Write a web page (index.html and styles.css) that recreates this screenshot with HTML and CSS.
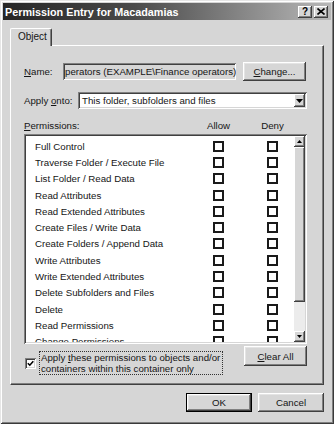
FILE: index.html
```html
<!DOCTYPE html>
<html>
<head>
<meta charset="utf-8">
<link rel="stylesheet" href="styles.css">
</head>
<body>
<div class="window">
  <div class="titlebar">
    <span class="title">Permission Entry for Macadamias</span>
    <div class="caption-btns">
      <span class="cbtn qbtn">?</span>
      <span class="cbtn"><svg width="8" height="7" viewBox="0 0 8 7"><path d="M0.5 0.5 L7.5 6.5 M7.5 0.5 L0.5 6.5" stroke="#000" stroke-width="1.6" fill="none"/></svg></span>
    </div>
  </div>
  <div class="tabs"><div class="tab">Object</div></div>
  <div class="panel">
    <div class="name-row">
      <span class="label name-label"><u>N</u>ame:</span>
      <div class="field">perators (EXAMPLE\Finance operators)</div>
      <div class="btn change-btn"><u>C</u>hange...</div>
    </div>
    <div class="apply-row">
      <span class="label apply-label">Apply <u>o</u>nto:</span>
      <div class="combo">
        <span class="combo-text">This folder, subfolders and files</span>
        <span class="combo-btn"><svg width="7" height="4" viewBox="0 0 7 4"><polygon points="0,0 7,0 3.5,4" fill="#000"/></svg></span>
      </div>
    </div>
    <div class="perm-head">
      <span class="ph-label"><u>P</u>ermissions:</span>
      <span class="ph-col"><span>Allow</span></span>
      <span></span>
      <span class="ph-col"><span>Deny</span></span>
    </div>
    <div class="listbox">
      <div class="items">
        <div class="item"><span>Full Control</span><span class="cb"></span><span></span><span class="cb"></span></div>
        <div class="item"><span>Traverse Folder / Execute File</span><span class="cb"></span><span></span><span class="cb"></span></div>
        <div class="item"><span>List Folder / Read Data</span><span class="cb"></span><span></span><span class="cb"></span></div>
        <div class="item"><span>Read Attributes</span><span class="cb"></span><span></span><span class="cb"></span></div>
        <div class="item"><span>Read Extended Attributes</span><span class="cb"></span><span></span><span class="cb"></span></div>
        <div class="item"><span>Create Files / Write Data</span><span class="cb"></span><span></span><span class="cb"></span></div>
        <div class="item"><span>Create Folders / Append Data</span><span class="cb"></span><span></span><span class="cb"></span></div>
        <div class="item"><span>Write Attributes</span><span class="cb"></span><span></span><span class="cb"></span></div>
        <div class="item"><span>Write Extended Attributes</span><span class="cb"></span><span></span><span class="cb"></span></div>
        <div class="item"><span>Delete Subfolders and Files</span><span class="cb"></span><span></span><span class="cb"></span></div>
        <div class="item"><span>Delete</span><span class="cb"></span><span></span><span class="cb"></span></div>
        <div class="item"><span>Read Permissions</span><span class="cb"></span><span></span><span class="cb"></span></div>
        <div class="item"><span>Change Permissions</span><span class="cb"></span><span></span><span class="cb"></span></div>
      </div>
      <div class="scrollbar">
        <div class="sb-btn"><svg width="5" height="3" viewBox="0 0 5 3"><polygon points="0,3 2.5,0 5,3" fill="#000"/></svg></div>
        <div class="sb-thumb"></div>
        <div class="sb-track"></div>
        <div class="sb-btn"><svg width="5" height="3" viewBox="0 0 5 3"><polygon points="0,0 5,0 2.5,3" fill="#000"/></svg></div>
      </div>
    </div>
    <div class="bottom-row">
      <div class="apply-check">
        <span class="chk"><svg width="7" height="7" viewBox="0 0 7 7"><path d="M0.8 3.2 L2.8 5.2 L6.3 1.2" stroke="#000" stroke-width="1.6" fill="none"/></svg></span>
        <span class="chk-label">Apply <u>t</u>hese permissions to objects and/or<br>containers within this container only</span>
      </div>
      <div class="btn clear-btn"><u>C</u>lear All</div>
    </div>
  </div>
  <div class="footer">
    <div class="btn ok-btn">OK</div>
    <div class="btn cancel-btn">Cancel</div>
  </div>
</div>
</body>
</html>
```

FILE: styles.css
```css
body {
  margin: 0;
  background: #d6d6d6;
  font-family: "Liberation Sans", Arial, sans-serif;
  font-size: 9.7px;
  color: #151515;
}

.window {
  width: 334px;
  height: 424px;
  box-sizing: border-box;
  padding: 3px;
  background: #d6d6d6;
  box-shadow: inset 1px 1px #e6e6e6, inset -1px -1px #3a3a3a, inset 2px 2px #fff, inset -2px -2px #808080;
  display: flex;
  flex-direction: column;
}

.titlebar {
  height: 17px;
  display: flex;
  align-items: center;
  justify-content: space-between;
  background: linear-gradient(to right, #262626 0%, #4a4a4a 40%, #b8b8b8 100%);
  padding: 0 3px 0 2px;
}

.title {
  color: #fff;
  font-weight: bold;
  font-size: 10.8px;
}

.caption-btns {
  display: flex;
  gap: 2px;
}

.cbtn {
  width: 14px;
  height: 12px;
  box-sizing: border-box;
  background: #d6d6d6;
  box-shadow: inset -1px -1px #404040, inset 1px 1px #fff, inset -2px -2px #808080;
  display: flex;
  align-items: center;
  justify-content: center;
}

.qbtn {
  font-weight: bold;
  font-size: 10px;
  color: #000;
  line-height: 1;
}

.tabs {
  margin-top: 8px;
  padding-left: 7px;
  display: flex;
}

.tab {
  width: 42px;
  height: 18px;
  box-sizing: border-box;
  margin-bottom: -1px;
  background: #d6d6d6;
  border-top: 1px solid #fff;
  border-left: 1px solid #fff;
  border-right: 1px solid #404040;
  box-shadow: inset -1px 0 #808080;
  border-radius: 2px 2px 0 0;
  padding-left: 7px;
  padding-top: 2px;
  line-height: 12px;
  font-size: 10px;
  position: relative;
  z-index: 1;
}

.panel {
  margin: 0 7px;
  height: 340px;
  box-sizing: border-box;
  border-top: 1px solid #fff;
  border-left: 1px solid #fff;
  border-right: 1px solid #404040;
  border-bottom: 1px solid #404040;
  box-shadow: inset -1px -1px #808080;
  padding: 16px 16px 0 13px;
  display: flex;
  flex-direction: column;
}

.name-row, .apply-row {
  display: flex;
  align-items: center;
}

.name-row { height: 19px; }

.apply-row {
  height: 17px;
  margin-top: 11px;
}

.name-label { width: 39px; flex: none; }
.apply-label { width: 54px; flex: none; }

.field {
  width: 173px;
  height: 17px;
  box-sizing: border-box;
  padding: 0 2px;
  line-height: 17px;
  white-space: nowrap;
  overflow: hidden;
  background: #d6d6d6;
  box-shadow: inset 1px 1px #808080, inset -1px -1px #fff, inset 2px 2px #404040, inset -2px -2px #d6d6d6;
}

.btn {
  box-sizing: border-box;
  background: #d6d6d6;
  box-shadow: inset -1px -1px #404040, inset 1px 1px #fff, inset -2px -2px #808080, inset 2px 2px #e4e4e4;
  display: flex;
  align-items: center;
  justify-content: center;
}

.change-btn {
  width: 63px;
  height: 19px;
  margin-left: 7px;
}

.combo {
  width: 229px;
  height: 17px;
  box-sizing: border-box;
  background: #fff;
  box-shadow: inset 1px 1px #808080, inset -1px -1px #fff, inset 2px 2px #404040, inset -2px -2px #d6d6d6;
  display: flex;
  align-items: center;
  padding: 2px 2px 2px 4px;
}

.combo-text { flex: 1; }

.combo-btn {
  width: 11px;
  height: 13px;
  box-sizing: border-box;
  background: #d6d6d6;
  box-shadow: inset -1px -1px #404040, inset 1px 1px #fff, inset -2px -2px #808080;
  display: flex;
  align-items: center;
  justify-content: center;
}

.perm-head {
  margin-top: 10px;
  height: 13px;
  display: grid;
  grid-template-columns: 189px 11px 43px 11px;
  align-items: center;
}

.ph-col {
  display: flex;
  justify-content: center;
  white-space: nowrap;
}

.listbox {
  margin-top: 2px;
  width: 283px;
  height: 210px;
  box-sizing: border-box;
  padding: 2px;
  background: #fff;
  box-shadow: inset 1px 1px #808080, inset -1px -1px #fff, inset 2px 2px #404040, inset -2px -2px #d6d6d6;
  display: flex;
}

.items {
  flex: 1;
  overflow: hidden;
  padding-top: 2px;
}

.item {
  height: 16.3px;
  padding-left: 9px;
  display: grid;
  grid-template-columns: 178px 11px 43px 11px;
  align-items: center;
  white-space: nowrap;
}

.cb {
  width: 11px;
  height: 11px;
  box-sizing: border-box;
  border: 2px solid #1a1a1a;
  background: #fff;
}

.scrollbar {
  width: 11px;
  display: flex;
  flex-direction: column;
}

.sb-btn {
  height: 11px;
  box-sizing: border-box;
  background: #d6d6d6;
  box-shadow: inset -1px -1px #404040, inset 1px 1px #fff, inset -2px -2px #808080;
  display: flex;
  align-items: center;
  justify-content: center;
}

.sb-thumb {
  height: 155px;
  background: #d6d6d6;
  box-shadow: inset -1px -1px #404040, inset 1px 1px #fff, inset -2px -2px #808080;
}

.sb-track {
  flex: 1;
  background: #ececec;
}

.bottom-row {
  margin-top: 2px;
  display: flex;
  justify-content: space-between;
  align-items: flex-start;
}

.apply-check {
  display: flex;
  align-items: center;
  margin-top: 5px;
  padding-left: 1px;
}

.chk {
  width: 11px;
  height: 11px;
  box-sizing: border-box;
  background: #fff;
  box-shadow: inset 1px 1px #808080, inset -1px -1px #fff, inset 2px 2px #404040, inset -2px -2px #d6d6d6;
  display: flex;
  align-items: center;
  justify-content: center;
  margin-right: 3px;
}

.chk-label {
  border: 1px dotted #333;
  padding: 0 2px 0 1px;
  line-height: 11px;
}

.clear-btn {
  width: 63px;
  height: 20px;
}

.footer {
  margin-top: 8px;
  padding-right: 7px;
  display: flex;
  justify-content: flex-end;
  gap: 6px;
}

.footer .btn {
  width: 66px;
  height: 19px;
}

.ok-btn {
  border: 1px solid #000;
}
```
